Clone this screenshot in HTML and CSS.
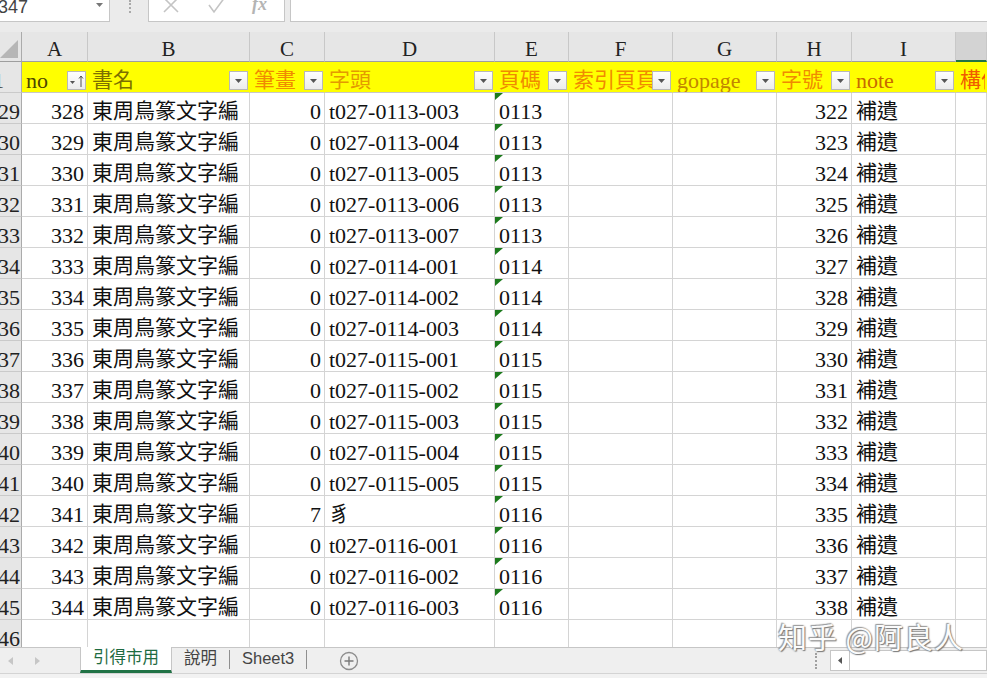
FILE: index.html
```html
<!DOCTYPE html>
<html lang="zh-Hant">
<head>
  <meta charset="UTF-8">
  <title>引得市用 - Excel</title>
  <link rel="stylesheet" href="styles.css">
</head>
<body>
  <div class="formula-bar">
    <div class="name-box">
      <span class="name-text">347</span>
      <svg class="name-arrow" width="7" height="4" viewBox="0 0 7 4"><path d="M0 0h7L3.5 4z" fill="#777"/></svg>
    </div>
    <div class="grip"></div>
    <div class="fx-buttons">
      <svg class="fx-cancel" width="16" height="14" viewBox="0 0 16 14"><path d="M1 -2L15 12M15 -2L1 12" stroke="#c4c4c4" stroke-width="1.6" fill="none"/></svg>
      <svg class="fx-enter" width="18" height="14" viewBox="0 0 18 14"><path d="M1 5l5 7L17 -3" stroke="#c4c4c4" stroke-width="1.6" fill="none"/></svg>
      <span class="fx">fx</span>
    </div>
    <div class="formula-input"></div>
  </div>

  <div class="sheet">
    <div class="grid" id="grid">
      <div class="corner"><span class="corner-tri"></span></div>
      <div class="ch">A</div>
      <div class="ch">B</div>
      <div class="ch">C</div>
      <div class="ch">D</div>
      <div class="ch">E</div>
      <div class="ch">F</div>
      <div class="ch">G</div>
      <div class="ch">H</div>
      <div class="ch">I</div>
      <div class="ch sel"></div>

      <div class="rh"><span class="rh-one">1</span></div>
      <div class="cell hdr t-dark"><span class="label">no</span><span class="filter"><svg width="17" height="17" viewBox="0 0 17 17"><path d="M2 9h5l-2.5 3z" fill="#555"/><path d="M13 4v11M11 6.5l2-2.5 2 2.5" stroke="#555" stroke-width="1" fill="none"/></svg></span></div>
      <div class="cell hdr cjk t-olive"><span class="label">書名</span><span class="filter"><svg width="7" height="4" viewBox="0 0 7 4"><path d="M0 0h7L3.5 4z" fill="#555"/></svg></span></div>
      <div class="cell hdr cjk t-orange"><span class="label">筆畫</span><span class="filter"><svg width="7" height="4" viewBox="0 0 7 4"><path d="M0 0h7L3.5 4z" fill="#555"/></svg></span></div>
      <div class="cell hdr cjk t-gold"><span class="label">字頭</span><span class="filter"><svg width="7" height="4" viewBox="0 0 7 4"><path d="M0 0h7L3.5 4z" fill="#555"/></svg></span></div>
      <div class="cell hdr cjk t-orange"><span class="label">頁碼</span><span class="filter"><svg width="7" height="4" viewBox="0 0 7 4"><path d="M0 0h7L3.5 4z" fill="#555"/></svg></span></div>
      <div class="cell hdr cjk t-orange"><span class="label">索引頁頁</span><span class="filter"><svg width="7" height="4" viewBox="0 0 7 4"><path d="M0 0h7L3.5 4z" fill="#555"/></svg></span></div>
      <div class="cell hdr t-brown"><span class="label">gopage</span><span class="filter"><svg width="7" height="4" viewBox="0 0 7 4"><path d="M0 0h7L3.5 4z" fill="#555"/></svg></span></div>
      <div class="cell hdr cjk t-orange"><span class="label">字號</span><span class="filter"><svg width="7" height="4" viewBox="0 0 7 4"><path d="M0 0h7L3.5 4z" fill="#555"/></svg></span></div>
      <div class="cell hdr t-rust"><span class="label">note</span><span class="filter"><svg width="7" height="4" viewBox="0 0 7 4"><path d="M0 0h7L3.5 4z" fill="#555"/></svg></span></div>
      <div class="cell hdr cjk t-red"><span class="label">構件</span></div>
      <!-- data rows are added by the script below -->
    </div>
  </div>

  <div class="tabbar">
    <div class="tab-nav">
      <svg width="5" height="8" viewBox="0 0 5 8"><path d="M5 0v8L0 4z" fill="#c6c6c6"/></svg>
      <svg width="5" height="8" viewBox="0 0 5 8"><path d="M0 0v8l5-4z" fill="#c6c6c6"/></svg>
    </div>
    <div class="tab active">引得市用</div>
    <div class="tab">說明</div>
    <div class="sep"></div>
    <div class="tab">Sheet3</div>
    <div class="sep"></div>
    <div class="add">
      <svg width="20" height="20" viewBox="0 0 20 20"><circle cx="10" cy="10" r="8.5" stroke="#8c8c8c" stroke-width="1.3" fill="none"/><path d="M10 5.5v9M5.5 10h9" stroke="#7a7a7a" stroke-width="1.4"/></svg>
    </div>
    <div class="hsplit"></div>
    <div class="hscroll">
      <div class="hscroll-btn"><svg width="4" height="7" viewBox="0 0 4 7"><path d="M4 0v7L0 3.5z" fill="#555"/></svg></div>
    </div>
  </div>
  <div class="statusbar"></div>

  <div class="watermark">知乎 @阿良人</div>

  <script>
    const rows = [
      ['t027-0113-003', '0113'],
      ['t027-0113-004', '0113'],
      ['t027-0113-005', '0113'],
      ['t027-0113-006', '0113'],
      ['t027-0113-007', '0113'],
      ['t027-0114-001', '0114'],
      ['t027-0114-002', '0114'],
      ['t027-0114-003', '0114'],
      ['t027-0115-001', '0115'],
      ['t027-0115-002', '0115'],
      ['t027-0115-003', '0115'],
      ['t027-0115-004', '0115'],
      ['t027-0115-005', '0115'],
      ['豸', '0116', 7],
      ['t027-0116-001', '0116'],
      ['t027-0116-002', '0116'],
      ['t027-0116-003', '0116']
    ];

    const grid = document.getElementById('grid');

    rows.forEach((item, i) => {
      const r = 29 + i;
      const head = item[0];
      const strokes = item[2] ?? 0;
      grid.insertAdjacentHTML('beforeend', `
        <div class="rh">${r}</div>
        <div class="cell num">${r + 299}</div>
        <div class="cell cjk">東周鳥篆文字編</div>
        <div class="cell num">${strokes}</div>
        <div class="cell${head.startsWith('t') ? '' : ' cjk'}">${head}</div>
        <div class="cell tri">${item[1]}</div>
        <div class="cell"></div>
        <div class="cell"></div>
        <div class="cell num">${r + 293}</div>
        <div class="cell cjk">補遺</div>
        <div class="cell"></div>
      `);
    });

    // last, partly hidden row
    let last = '<div class="rh">46</div>';
    for (let c = 0; c < 10; c++) last += '<div class="cell"></div>';
    grid.insertAdjacentHTML('beforeend', last);
  </script>
</body>
</html>
```

FILE: styles.css
```css
* {
  box-sizing: border-box;
}
body {
  margin: 0;
  width: 987px;
  height: 678px;
  overflow: hidden;
  position: relative;
  background: #ebebeb;
  font-family: "Liberation Sans", "Noto Sans CJK TC", sans-serif;
}

/* formula bar */
.formula-bar {
  height: 32px;
  display: flex;
  align-items: flex-start;
  background: #ebebeb;
}
.name-box {
  width: 110px;
  height: 22px;
  display: flex;
  align-items: flex-start;
  justify-content: space-between;
  background: #fff;
  border-right: 1px solid #c6c6c6;
  border-bottom: 1px solid #c6c6c6;
  overflow: hidden;
}
.name-text {
  margin-left: -2px;
  font-size: 18px;
  line-height: 14px;
  color: #444;
}
.name-arrow {
  margin: 3px 6px 0 0;
}
.grip {
  width: 2px;
  height: 13px;
  margin: 0 17px 0 19px;
  border-left: 2px dotted #a9a9a9;
}
.fx-buttons {
  width: 137px;
  height: 22px;
  display: flex;
  align-items: flex-start;
  background: #fff;
  border: 1px solid #c6c6c6;
  border-top: none;
  overflow: hidden;
}
.fx-cancel {
  margin-left: 14px;
}
.fx-enter {
  margin-left: 29px;
}
.fx {
  margin-left: 26px;
  margin-top: -5px;
  font: italic bold 18px/18px "Liberation Serif", serif;
  color: #b4b4b4;
}
.formula-input {
  flex: 1;
  height: 22px;
  margin-left: 5px;
  background: #fff;
  border-left: 1px solid #c6c6c6;
  border-bottom: 1px solid #c6c6c6;
}

/* sheet grid */
.sheet {
  height: 615px;
  overflow: hidden;
  background: #fff;
}
.grid {
  display: grid;
  grid-template-columns: 22px 66px 162px 75px 170px 74px 104px 104px 75px 104px 31px;
  grid-template-rows: 30px;
  grid-auto-rows: 31px;
}
.corner {
  display: flex;
  align-items: flex-end;
  justify-content: flex-end;
  padding: 0 3px 3px 0;
  background: #e6e6e6;
  border-right: 1px solid #ababab;
  border-bottom: 1px solid #9e9e9e;
}
.corner-tri {
  width: 0;
  height: 0;
  border-bottom: 18px solid #b6b6b6;
  border-left: 18px solid transparent;
}
.ch {
  display: flex;
  align-items: flex-end;
  justify-content: center;
  background: #e6e6e6;
  border-right: 1px solid #c8c8c8;
  border-bottom: 1px solid #9e9e9e;
  font: 21px/23px "Liberation Serif", serif;
  color: #222;
}
.ch.sel {
  background: #d3d3d3;
  border-bottom: 2px solid #217346;
}
.rh {
  display: flex;
  align-items: flex-end;
  justify-content: flex-end;
  padding-right: 1px;
  overflow: hidden;
  white-space: nowrap;
  background: #e6e6e6;
  border-right: 1px solid #ababab;
  border-bottom: 1px solid #cacaca;
  font: 22px/23px "Liberation Serif", serif;
  color: #222;
}
.rh-one {
  margin-right: 16px;
}
.cell {
  position: relative;
  display: flex;
  align-items: flex-end;
  padding: 0 3px 0 4px;
  overflow: hidden;
  white-space: nowrap;
  border-right: 1px solid #d4d4d4;
  border-bottom: 1px solid #d4d4d4;
  font: 22px/23px "Liberation Serif", "Noto Sans CJK TC", serif;
  color: #111;
}
.cell.cjk {
  font-size: 21px;
}
.cell.num {
  justify-content: flex-end;
}
.cell.tri::before {
  content: "";
  position: absolute;
  left: 0;
  top: 0;
  border-top: 7px solid #1c7a1c;
  border-right: 8px solid transparent;
}

/* header row with filters */
.cell.hdr {
  padding-right: 1px;
  background: #ffff00;
  border-right-color: #ffff00;
  border-bottom-color: #c8c8c8;
}
.label {
  flex: 1;
  min-width: 0;
  overflow: hidden;
}
.filter {
  flex-shrink: 0;
  width: 19px;
  height: 19px;
  margin-bottom: 2px;
  display: flex;
  align-items: center;
  justify-content: center;
  background: linear-gradient(#fefefe, #ececec);
  border: 1px solid #b8b8b8;
}
.t-dark { color: #4d4600; }
.t-olive { color: #7d7000; }
.t-orange { color: #f08a00; }
.t-gold { color: #e49a00; }
.t-brown { color: #c28600; }
.t-rust { color: #c86a00; }
.t-red { color: #f05a00; }

/* sheet tabs */
.tabbar {
  height: 26px;
  display: flex;
  align-items: stretch;
  background: #efefef;
  border-top: 1px solid #c6c6c6;
}
.tab-nav {
  width: 80px;
  display: flex;
  align-items: center;
  gap: 22px;
  padding-left: 8px;
}
.tab {
  display: flex;
  align-items: flex-start;
  padding: 0 12px;
  font-size: 16.5px;
  line-height: 20px;
  color: #444;
}
.tab.active {
  width: 92px;
  justify-content: center;
  margin-top: -1px;
  background: #fff;
  color: #1e6b41;
  border-left: 1px solid #c6c6c6;
  border-right: 1px solid #c6c6c6;
  border-bottom: 3px solid #217346;
}
.sep {
  width: 1px;
  height: 19px;
  margin-top: 2px;
  background: #8f8f8f;
}
.add {
  display: flex;
  align-items: center;
  margin-left: 32px;
}
.hsplit {
  width: 2px;
  height: 16px;
  align-self: center;
  margin-left: auto;
  border-left: 2px dotted #a0a0a0;
}
.hscroll {
  width: 157px;
  height: 21px;
  align-self: center;
  margin-left: 13px;
  display: flex;
  background: #fff;
  border: 1px solid #c6c6c6;
}
.hscroll-btn {
  width: 19px;
  display: flex;
  align-items: center;
  justify-content: center;
  border-right: 1px solid #c6c6c6;
}
.statusbar {
  height: 5px;
  background: #f2f2f2;
  border-top: 1px solid #d4d4d4;
}

/* watermark over the grid */
.watermark {
  position: absolute;
  left: 778px;
  top: 619px;
  font: 29px/34px "Noto Sans CJK SC", sans-serif;
  letter-spacing: 1px;
  color: #fbfbfb;
  text-shadow: 1px 1px 1px #7a7a7a, -1px -1px 1px #9a9a9a, 0 0 2px #888;
  white-space: nowrap;
}
```
